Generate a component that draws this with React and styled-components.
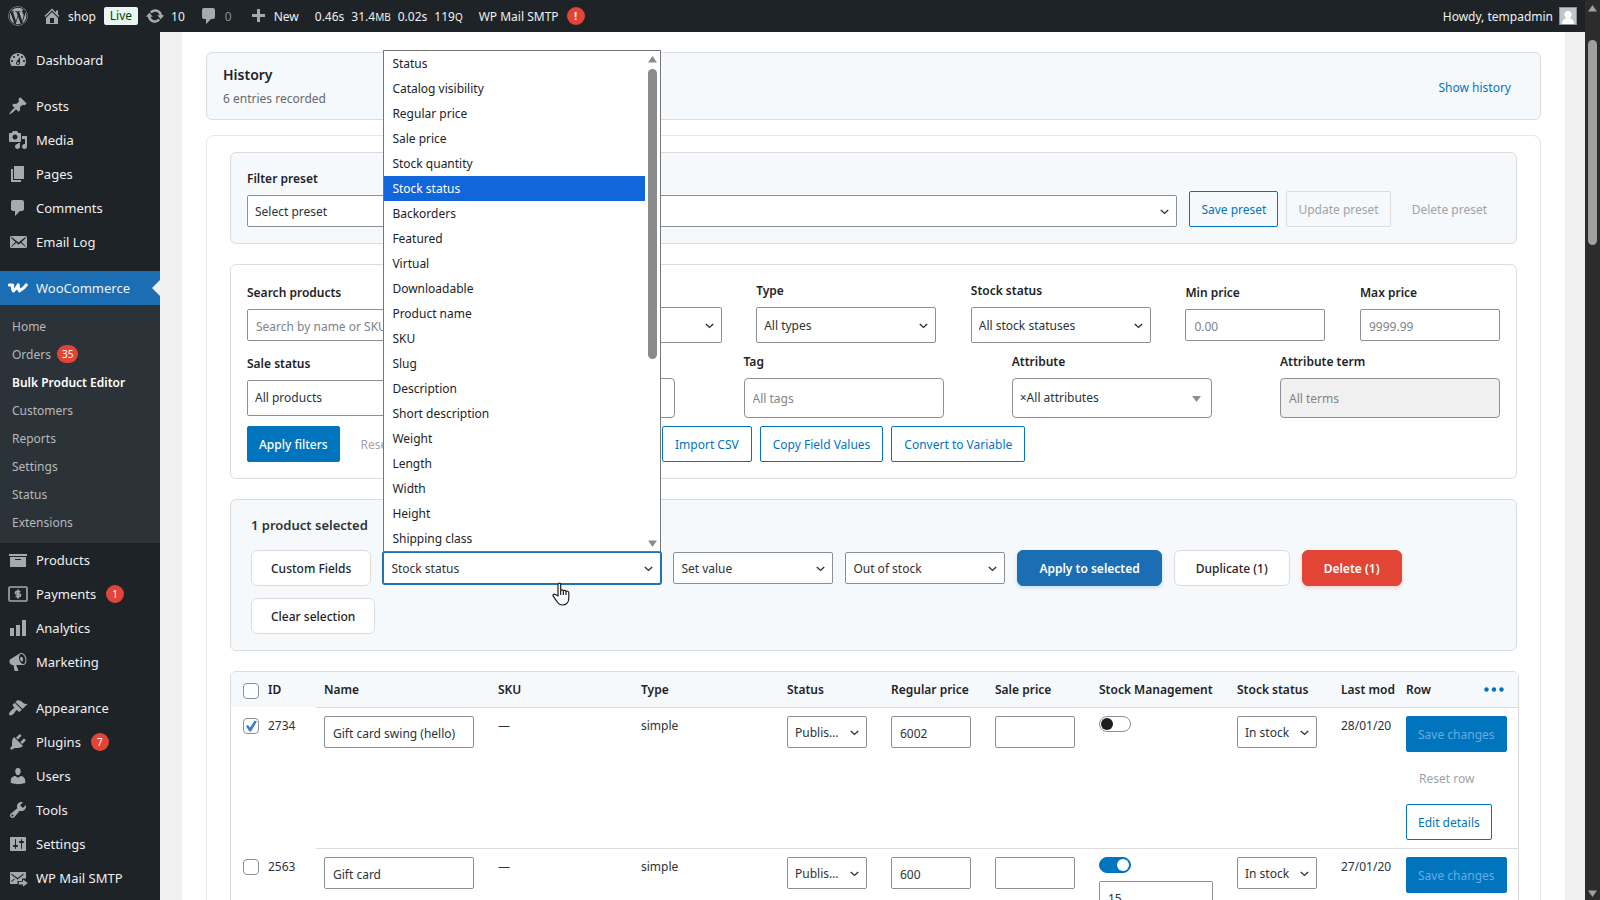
import React from "react";
import styled, { createGlobalStyle, css } from "styled-components";
import { FaWordpress } from "react-icons/fa";

const GlobalStyle = createGlobalStyle`
  *, *::before, *::after {
    box-sizing: border-box;
  }

  body {
    margin: 0;
    background: #f0f0f1;
  }

  body, button, input, select {
    font-family: "Noto Sans", "Open Sans", sans-serif;
    font-size: 12px;
    color: #2c3338;
  }

  ul {
    margin: 0;
    padding: 0;
    list-style: none;
  }

  h2, p {
    margin: 0;
  }
`;

const Window = styled.div`
  display: grid;
  grid-template-columns: minmax(0, 1fr) 15px;
  height: 100vh;
  overflow: hidden;
`;

const Page = styled.div`
  display: grid;
  grid-template-columns: 160px minmax(0, 1fr);
  grid-template-rows: 32px minmax(0, 1fr);
  overflow: hidden;
`;

const PageScrollbar = styled.div`
  display: flex;
  flex-direction: column;
  align-items: center;
  padding: 5px 0 3px;
  background: #2c2c2c;
`;

const PageThumb = styled.div`
  width: 9px;
  height: 205px;
  margin: 28px 0 auto;
  border-radius: 5px;
  background: #9f9f9f;
`;

const ScrollArrow = styled.svg.attrs({
  viewBox: "0 0 9 7",
  width: 9,
  height: 7,
})`
  display: block;
  fill: ${(props) => props.$color || "#9f9f9f"};
`;

/* admin bar */

const AdminBar = styled.header`
  grid-column: 1 / -1;
  display: flex;
  align-items: center;
  padding: 0 8px;
  background: #1d2327;
`;

const BarLink = styled.a`
  display: flex;
  align-items: center;
  gap: 6px;
  height: 32px;
  margin-right: ${(props) => props.$after || 16}px;
  color: ${(props) => (props.$dim ? "#8c8f94" : "#f0f0f1")};
  text-decoration: none;
  white-space: nowrap;

  svg {
    flex: none;
    color: #a7aaad;
  }
`;

const Stats = styled.span`
  display: flex;
  gap: 7px;

  small {
    font-size: 10px;
  }
`;

const LiveBadge = styled.span`
  padding: 0 6px;
  margin-right: 7px;
  border-radius: 2px;
  line-height: 18px;
  background: #e9f5f0;
  color: #00450c;
`;

const CountBadge = styled.span`
  display: inline-flex;
  align-items: center;
  justify-content: center;
  min-width: 18px;
  height: 18px;
  margin-left: 2px;
  padding: 0 5px;
  border-radius: 9px;
  background: #e24535;
  color: #fff;
  font-size: 10px;
  font-weight: ${(props) => (props.$bold ? 700 : 400)};
`;

const Account = styled(BarLink)`
  margin: 0 0 0 auto;
`;

const Avatar = styled.svg`
  border: 1px solid #8c8f94;
  background: #c3c4c7;
`;

/* side menu */

const SideMenu = styled.nav`
  padding-top: 11px;
  overflow: hidden;
  background: #1d2327;
`;

const MenuGroup = styled.ul`
  margin-bottom: ${(props) => (props.$last ? 0 : 12)}px;
`;

const MenuLink = styled.a`
  position: relative;
  display: flex;
  align-items: center;
  gap: 8px;
  height: 34px;
  padding-left: 8px;
  font-size: 13px;
  color: #f0f0f1;
  text-decoration: none;
  background: ${(props) => (props.$current ? "#1c6eb4" : "transparent")};

  svg {
    flex: none;
    color: ${(props) => (props.$current ? "#fff" : "#a7aaad")};
  }

  &::after {
    content: "";
    display: ${(props) => (props.$current ? "block" : "none")};
    position: absolute;
    right: 0;
    top: 9px;
    border: 8px solid transparent;
    border-left-width: 0;
    border-right-color: #f0f0f1;
  }
`;

const SubMenu = styled.ul`
  padding: 7px 0;
  background: #2c3338;
`;

const SubLink = styled.a`
  display: flex;
  align-items: center;
  gap: 4px;
  height: 28px;
  padding-left: 12px;
  color: ${(props) => (props.$current ? "#fff" : "#b5b9bd")};
  font-weight: ${(props) => (props.$current ? 600 : 400)};
  text-decoration: none;
`;

/* content cards */

const Main = styled.main`
  margin: 0 20px 0 22px;
  padding: 20px 24px;
  background: #fff;
`;

const Card = styled.section`
  padding: 16px;
  border: 1px solid #dcdcde;
  border-radius: 6px;
  background: ${(props) => (props.$tinted ? "#f6f9fc" : "#fff")};
`;

const HistoryCard = styled(Card)`
  display: flex;
  align-items: center;
  justify-content: space-between;
  height: 68px;
  margin-bottom: 15px;
  padding: 2px 16px 0;
`;

const HistoryTitle = styled.h2`
  font-size: 14px;
  line-height: 24px;
  font-weight: 600;
  color: #1d2327;
`;

const HistoryText = styled.p`
  line-height: 24px;
  color: #646970;
`;

const EditorCard = styled(Card)`
  display: flex;
  flex-direction: column;
  gap: 20px;
  padding: 16px 23px;
  border-color: #e6e6e8;
  border-radius: 8px;
`;

const PresetCard = styled(Card)`
  display: flex;
  align-items: flex-end;
  gap: 12px;
`;

const ButtonGroup = styled.div`
  display: flex;
  gap: 8px;
`;

const FilterCard = styled(Card)`
  display: grid;
  grid-template-rows: 62px 67px 36px;
  row-gap: 8px;
`;

const FilterRow = styled.div`
  display: flex;
  align-items: center;
  justify-content: space-between;
`;

const FilterActions = styled(ButtonGroup)`
  & > button {
    padding: 0 12px;
  }
`;

const FirstActions = styled(ButtonGroup)`
  width: 407px;
`;

const BulkCard = styled(Card)`
  padding: 16px 20px;
`;

const BulkTitle = styled.h2`
  margin-bottom: 16px;
  font-size: 13px;
  line-height: 18px;
  font-weight: 600;
`;

const BulkRow = styled.div`
  display: flex;
  flex-wrap: wrap;
  align-items: center;
  gap: 12px;
`;

/* controls */

const Field = styled.div`
  display: flex;
  flex-direction: column;
  gap: 6px;
  width: ${(props) => (props.$width ? `${props.$width}px` : "auto")};
  flex: ${(props) => (props.$width ? "0 1 auto" : "1")};
`;

const Label = styled.label`
  font-size: 12px;
  line-height: 20px;
  min-height: 20px;
  font-weight: 600;
  color: #1d2327;
`;

const controlLook = css`
  width: 100%;
  height: ${(props) => props.$height || 32}px;
  border: 1px solid #8c8f94;
  border-radius: ${(props) => (props.$round ? 4 : 2)}px;
  background: #fff;
  outline: none;
`;

const TextInput = styled.input`
  ${controlLook}
  display: block;
  padding: 2px 8px 0;

  &::placeholder {
    color: #808489;
    opacity: 1;
  }

  &:disabled {
    background: #f0f0f1;
  }
`;

const SelectBox = styled.div`
  position: relative;
  width: ${(props) => (props.$width ? `${props.$width}px` : "100%")};
`;

const SelectInput = styled.select`
  ${controlLook}
  appearance: none;
  display: block;
  padding: 0 24px 0 7px;
  text-overflow: ellipsis;
  ${(props) =>
    props.$active &&
    css`
      border-color: #2271b1;
      box-shadow: 0 0 0 1px #2271b1;
    `}
`;

const SelectCaret = styled.svg.attrs({
  viewBox: "0 0 9 6",
  width: 9,
  height: 6,
})`
  position: absolute;
  right: 8px;
  top: calc(50% - 2px);
  fill: none;
  stroke: #2c3338;
  stroke-width: 1.4;
  pointer-events: none;
`;

const TriangleCaret = styled.svg.attrs({
  viewBox: "0 0 9 6",
  width: 9,
  height: 6,
})`
  position: absolute;
  right: 11px;
  top: calc(50% - 2px);
  fill: #8c8f94;
  pointer-events: none;
`;

const Button = styled.button`
  flex: none;
  height: 36px;
  padding: 0 ${(props) => (props.$kind === "link" ? 12 : 11)}px;
  border: 1px solid #0075be;
  border-radius: 2px;
  background: transparent;
  color: #0075be;
  white-space: nowrap;

  ${(props) =>
    props.$kind === "primary" &&
    css`
      background: #0075be;
      color: #fff;
      font-weight: 500;
    `}

  ${(props) =>
    props.$kind === "link" &&
    css`
      border-color: transparent;
    `}

  &:disabled {
    color: ${(props) => (props.$kind === "primary" ? "#66ace0" : "#a0a3a6")};
    font-weight: 400;
    border-color: ${(props) =>
      ({ primary: "#0075be", link: "transparent" })[props.$kind] || "#dcdcde"};
  }
`;

const BulkButton = styled.button`
  height: 36px;
  padding: 0 ${(props) => (props.$wide ? 21 : 19)}px;
  border: 1px solid #dcdcde;
  border-radius: 6px;
  background: #fff;
  color: #1d2327;
  font-weight: 500;
  white-space: nowrap;

  ${(props) =>
    props.$fill &&
    css`
      border-color: ${props.$fill};
      background: ${props.$fill};
      color: #fff;
      font-weight: 600;
      box-shadow: 0 2px 4px ${props.$fill}33;
    `}
`;

/* field picker list */

const Popup = styled.div`
  position: absolute;
  z-index: 2;
  left: 0;
  right: 0;
  bottom: 100%;
  display: grid;
  grid-template-columns: minmax(0, 1fr) 15px;
  border: 1px solid #767676;
  background: #fff;
`;

const PopupOption = styled.li`
  height: 25px;
  padding: 1px 0 0 8px;
  line-height: 24px;
  color: ${(props) => (props.$active ? "#fff" : "#1d2327")};
  background: ${(props) => (props.$active ? "#1166dc" : "transparent")};
`;

const PopupScrollbar = styled.div`
  display: flex;
  flex-direction: column;
  align-items: center;
  padding: 5px 0 4px;
`;

const PopupThumb = styled.div`
  width: 9px;
  height: 290px;
  margin: 6px 0 auto;
  border-radius: 5px;
  background: #8b8b8b;
`;

const HandCursor = styled.svg`
  position: absolute;
  z-index: 3;
  left: 169px;
  top: 30px;
`;

/* product table */

const TableFrame = styled.div`
  margin-right: -2px;
  border: 1px solid #dcdcde;
  border-radius: 6px;
  overflow: hidden;
`;

const ProductTable = styled.table`
  width: 100%;
  table-layout: fixed;
  border-collapse: separate;
  border-spacing: 0;
`;

const HeadCell = styled.th`
  height: 36px;
  padding: 0 ${(props) => (props.$clip ? 0 : 8)}px 0 8px;
  border-bottom: 1px solid ${(props) => (props.$sticky ? "transparent" : "#dcdcde")};
  background: #f6f9fc;
  background-clip: padding-box;
  font-weight: 600;
  color: #1d2327;
  text-align: left;
  white-space: nowrap;
  overflow: hidden;
`;

const HeadSplit = styled.div`
  display: flex;
  align-items: center;
  justify-content: space-between;
`;

const MoreButton = styled.button`
  display: flex;
  padding: 4px 6px;
  border: 0;
  background: none;
`;

const Cell = styled.td`
  padding: 8px ${(props) => (props.$clip ? 0 : 8)}px 8px 8px;
  border-bottom: ${(props) => (props.$sticky ? 0 : 1)}px solid #dcdcde;
  vertical-align: top;
  line-height: 20px;
`;

const CellStack = styled.div`
  display: flex;
  flex-direction: column;
  align-items: flex-start;
  gap: 8px;
`;

const CheckBox = styled.input`
  appearance: none;
  display: block;
  width: 16px;
  height: 16px;
  margin: 2px 0 0 4px;
  border: 1px solid #8c8f94;
  border-radius: 4px;
  background: #fff;

  &:checked::before {
    content: "";
    display: block;
    width: 14px;
    height: 14px;
    background: #3582c4;
    clip-path: polygon(14% 50%, 28% 42%, 43% 60%, 76% 10%, 92% 18%, 50% 90%, 38% 90%);
  }
`;

const Toggle = styled.input`
  appearance: none;
  display: block;
  width: 32px;
  height: 16px;
  margin: 0;
  padding: 1px;
  border: 1px solid #8c8f94;
  border-radius: 8px;
  background: #fff;

  &::before {
    content: "";
    display: block;
    width: 12px;
    height: 12px;
    border-radius: 50%;
    background: #1e1e1e;
  }

  &:checked {
    border-color: #0075be;
    background: #0075be;
  }

  &:checked::before {
    margin-left: 16px;
    background: #fff;
  }
`;

const iconPaths = {
  dashboard:
    "M3.76 16h12.48c1.1-1.37 1.76-3.11 1.76-5 0-4.42-3.58-8-8-8s-8 3.58-8 8c0 1.89.66 3.63 1.76 5zM10 4c.55 0 1 .45 1 1s-.45 1-1 1-1-.45-1-1 .45-1 1-1zM6 6c.55 0 1 .45 1 1s-.45 1-1 1-1-.45-1-1 .45-1 1-1zm8 0c.55 0 1 .45 1 1s-.45 1-1 1-1-.45-1-1 .45-1 1-1zm-5.37 5.55L12 7v6c0 1.1-.9 2-2 2s-2-.9-2-2c0-.57.24-1.08.63-1.45zM4 10c.55 0 1 .45 1 1s-.45 1-1 1-1-.45-1-1 .45-1 1-1zm12 0c.55 0 1 .45 1 1s-.45 1-1 1-1-.45-1-1 .45-1 1-1zm-5 3c0-.55-.45-1-1-1s-1 .45-1 1 .45 1 1 1 1-.45 1-1z",
  pin: "M10.44 3.02l1.82-1.82 6.36 6.35-1.83 1.82c-1.05-.68-2.48-.57-3.41.36l-.75.75c-.92.93-1.04 2.35-.35 3.41l-1.83 1.82-2.41-2.41-2.8 2.79c-.42.42-3.38 2.71-3.8 2.29s1.86-3.39 2.28-3.81l2.79-2.79L4.1 9.36l1.83-1.82c1.05.69 2.48.57 3.4-.36l.75-.75c.93-.92 1.05-2.35.36-3.41z",
  media:
    "M13 11V4c0-.55-.45-1-1-1h-1.67L9 1H5L3.67 3H2c-.55 0-1 .45-1 1v7c0 .55.45 1 1 1h10c.55 0 1-.45 1-1zM7 4.5c1.38 0 2.5 1.12 2.5 2.5S8.38 9.5 7 9.5 4.5 8.38 4.5 7 5.62 4.5 7 4.5zM14 6h5v10.5c0 1.38-1.12 2.5-2.5 2.5S14 17.88 14 16.5s1.12-2.5 2.5-2.5c.17 0 .34.02.5.05V9h-3V6zm-4 8.05V13h2v3.5c0 1.38-1.12 2.5-2.5 2.5S7 17.88 7 16.5 8.12 14 9.5 14c.17 0 .34.02.5.05z",
  page: "M6 15V2h10v13H6zm-1 1h8v2H3V5h2v11z",
  comment:
    "M5 2h9c1.1 0 2 .9 2 2v7c0 1.1-.9 2-2 2h-2l-5 5v-5H5c-1.1 0-2-.9-2-2V4c0-1.1.9-2 2-2z",
  email:
    "M19 14.5v-9c0-.83-.67-1.5-1.5-1.5H3.49c-.83 0-1.5.67-1.5 1.5v9c0 .83.67 1.5 1.5 1.5H17.5c.83 0 1.5-.67 1.5-1.5zm-1.31-9.11c.33.33.15.67-.03.84L13.6 9.95l3.9 4.06c.12.14.2.36.06.51-.13.16-.43.15-.56.05l-4.37-3.73-2.14 1.95-2.13-1.95-4.37 3.73c-.13.1-.43.11-.56-.05-.14-.15-.06-.37.06-.51l3.9-4.06-4.06-3.72c-.18-.17-.36-.51-.03-.84s.67-.17.95.07l6.24 5.04 6.25-5.04c.28-.24.62-.4.95-.07z",
  archive: "M19 4v2H1V4h18zM2 7h16v10H2V7zm11 3V9H7v1h6z",
  chart: "M18 18V2h-4v16h4zm-6 0V7H8v11h4zm-6 0v-8H2v8h4z",
  megaphone:
    "M18.15 5.94c.46 1.62.38 3.22-.02 4.48-.42 1.28-1.26 2.18-2.3 2.48-.16.06-.26.06-.4.06-.06.02-.12.02-.18.02-.06.02-.14.02-.22.02h-6.8l2.22 5.5c.02.14-.06.26-.14.34-.08.1-.24.16-.34.16H6.95c-.1 0-.26-.06-.34-.16-.08-.08-.16-.2-.14-.34l-1-5.5H4.25l-.02-.02c-.5.06-1.08-.18-1.54-.62s-.88-1.08-1.06-1.88c-.24-.8-.2-1.56-.02-2.2.18-.62.58-1.08 1.06-1.3l.02-.02 9-5.4c.1-.06.18-.1.24-.16.06-.04.14-.08.24-.12.16-.08.28-.12.5-.18 1.04-.3 2.24.1 3.22.98s1.84 2.24 2.26 3.86zm-2.58 5.98h-.02c.4-.1.74-.34 1.04-.7.58-.7.86-1.76.86-3.04 0-.64-.1-1.3-.28-1.98-.34-1.36-1.02-2.5-1.78-3.24s-1.68-1.1-2.46-.88c-.82.22-1.4.96-1.7 2-.32 1.04-.28 2.36.06 3.72.38 1.36 1 2.5 1.8 3.24.78.74 1.62 1.1 2.48.88zm-2.54-7.08c.22-.04.42-.02.62.04.38.16.76.48 1.02 1s.42 1.2.42 1.78c0 .3-.04.56-.12.8-.18.48-.44.84-.86.94-.34.1-.8-.06-1.14-.4s-.64-.86-.78-1.5c-.18-.62-.12-1.24.02-1.72s.48-.84.82-.94z",
  brush:
    "M14.48 11.06L7.41 3.99l1.5-1.5c.5-.56 2.3-.47 3.51.32 1.21.8 1.43 1.28 2.91 2.1 1.18.64 2.45 1.26 4.45.85zm-.71.71L6.7 4.7 4.93 6.47c-.39.39-.39 1.02 0 1.41l1.06 1.06c.39.39.39 1.03 0 1.42-.6.6-1.43 1.11-2.21 1.69-.35.26-.7.53-1.01.84C1.43 14.23.4 16.08 1.4 17.07c.99 1 2.84-.03 4.18-1.36.31-.31.58-.66.85-1.02.57-.78 1.08-1.61 1.69-2.21.39-.39 1.02-.39 1.41 0l1.06 1.06c.39.39 1.02.39 1.41 0z",
  plug: "M13.11 4.36L9.87 7.6 8 5.73l3.24-3.24c.35-.34 1.05-.2 1.56.32.52.51.66 1.21.31 1.55zm-8 1.77l.91-1.12 9.01 9.01-1.19.84c-.71.71-2.63 1.16-3.82 1.16H6.14L4.9 17.26c-.59.59-1.54.59-2.12 0-.59-.58-.59-1.53 0-2.12l1.24-1.24v-3.88c0-1.13.4-3.19 1.09-3.89zm7.26 3.97l3.24-3.24c.34-.35 1.04-.21 1.55.31.52.51.66 1.21.31 1.55l-3.24 3.25z",
  user: "M10 9.25c-2.27 0-2.73-3.44-2.73-3.44C7 4.02 7.82 2 9.97 2c2.16 0 2.98 2.02 2.71 3.81 0 0-.41 3.44-2.68 3.44zm0 2.57L12.72 10c2.39 0 4.52 2.33 4.52 4.53v2.49s-3.65 1.13-7.24 1.13c-3.65 0-7.24-1.13-7.24-1.13v-2.49c0-2.25 1.94-4.48 4.47-4.48z",
  wrench:
    "M16.68 9.77c-1.34 1.34-3.3 1.67-4.95.99l-5.41 6.52c-.99.99-2.59.99-3.58 0s-.99-2.59 0-3.57l6.52-5.42c-.68-1.65-.35-3.61.99-4.95 1.28-1.28 3.12-1.62 4.72-1.06l-2.89 2.89 2.82 2.82 2.86-2.87c.53 1.58.18 3.39-1.08 4.65zM3.81 16.21c.4.39 1.04.39 1.43 0 .4-.4.4-1.04 0-1.43-.39-.4-1.03-.4-1.43 0-.39.39-.39 1.03 0 1.43z",
  sliders:
    "M18 16V4c0-.55-.45-1-1-1H3c-.55 0-1 .45-1 1v12c0 .55.45 1 1 1h14c.55 0 1-.45 1-1zM8 11h1c.55 0 1 .45 1 1s-.45 1-1 1H8v1.5c0 .28-.22.5-.5.5s-.5-.22-.5-.5V13H6c-.55 0-1-.45-1-1s.45-1 1-1h1V5.5c0-.28.22-.5.5-.5s.5.22.5.5V11zm5-2h-1c-.55 0-1-.45-1-1s.45-1 1-1h1V5.5c0-.28.22-.5.5-.5s.5.22.5.5V7h1c.55 0 1 .45 1 1s-.45 1-1 1h-1v5.5c0 .28-.22.5-.5.5s-.5-.22-.5-.5V9z",
  home: "M16 8.5l1.53 1.53-1.06 1.06L10 4.6l-6.47 6.49-1.06-1.06L10 2.5l4 4v-2h2v4zm-6-2.46l6 5.99V18H4v-5.97zM12 17v-5H8v5h4z",
  update:
    "M10.2 3.28c3.53 0 6.43 2.61 6.92 6h2.08l-3.5 4-3.5-4h2.32c-.45-1.97-2.21-3.45-4.32-3.45-1.45 0-2.73.71-3.54 1.78L4.95 5.66C6.23 4.2 8.11 3.28 10.2 3.28zm-.4 13.44c-3.52 0-6.43-2.61-6.92-6H.8l3.5-4c1.17 1.33 2.33 2.67 3.5 4H5.48c.45 1.97 2.21 3.45 4.32 3.45 1.45 0 2.73-.71 3.54-1.78l1.71 1.95c-1.28 1.46-3.15 2.38-5.25 2.38z",
  plus: "M17 8v3h-5v5H9v-5H4V8h5V3h3v5h5z",
  mail: "M2 4h15c.6 0 1 .4 1 1v5.5h-4v2.6H9.500V16H3c-.6 0-1-.4-1-1V5c0-.6.4-1 1-1zM3.400 5.600v1.200l6.100 4.600 6.100-4.600V5.600l-6.100 4.500zM3.400 14.300l3.400-3-.8-.6-2.600 2.400zM15 11.400l4.800 3.700-4.800 3.700v-2.300h-4.200v-2.800H15z",
};

function Icon({ name, size = 20 }) {
  if (name === "woo") {
    return (
      <svg width={size} height={size} viewBox="0 0 20 20" fill="none" stroke="currentColor">
        <path
          d="M1.500 7H4.600C4.300 9.500 4.500 11.500 5.400 12.800C7.500 11.600 9.200 9.500 10.200 7C10.100 9.500 10.400 11.500 11.500 12.800C14 11.600 16.600 9.500 18.200 7"
          strokeWidth="3.200"
          strokeLinejoin="round"
          strokeLinecap="round"
        />
      </svg>
    );
  }
  if (name === "payments") {
    return (
      <svg width={size} height={size} viewBox="0 0 20 20" fill="none" stroke="currentColor">
        <rect x="1" y="3" width="18" height="14" rx="1" strokeWidth="1.600" />
        <path d="M12.400 7.700H8.700a1.100 1.100 0 0 0 0 2.300h2.600a1.100 1.100 0 0 1 0 2.300H7.600M10 5.600v8.800" strokeWidth="1.700" />
      </svg>
    );
  }
  return (
    <svg width={size} height={size} viewBox="0 0 20 20" fill="currentColor">
      <path fillRule="evenodd" d={iconPaths[name]} />
    </svg>
  );
}

const menuGroups = [
  [{ label: "Dashboard", icon: "dashboard" }],
  [
    { label: "Posts", icon: "pin" },
    { label: "Media", icon: "media" },
    { label: "Pages", icon: "page" },
    { label: "Comments", icon: "comment" },
    { label: "Email Log", icon: "email" },
  ],
  [
    {
      label: "WooCommerce",
      icon: "woo",
      current: true,
      children: [
        { label: "Home" },
        { label: "Orders", count: 35 },
        { label: "Bulk Product Editor", current: true },
        { label: "Customers" },
        { label: "Reports" },
        { label: "Settings" },
        { label: "Status" },
        { label: "Extensions" },
      ],
    },
    { label: "Products", icon: "archive" },
    { label: "Payments", icon: "payments", count: 1 },
    { label: "Analytics", icon: "chart" },
    { label: "Marketing", icon: "megaphone" },
  ],
  [
    { label: "Appearance", icon: "brush" },
    { label: "Plugins", icon: "plug", count: 7 },
    { label: "Users", icon: "user" },
    { label: "Tools", icon: "wrench" },
    { label: "Settings", icon: "sliders" },
    { label: "WP Mail SMTP", icon: "mail" },
  ],
];

const bulkFields = [
  "Status",
  "Catalog visibility",
  "Regular price",
  "Sale price",
  "Stock quantity",
  "Stock status",
  "Backorders",
  "Featured",
  "Virtual",
  "Downloadable",
  "Product name",
  "SKU",
  "Slug",
  "Description",
  "Short description",
  "Weight",
  "Length",
  "Width",
  "Height",
  "Shipping class",
];

const products = [
  {
    id: 2734,
    name: "Gift card swing (hello)",
    price: "6002",
    selected: true,
    modified: "28/01/20",
  },
  { id: 2563, name: "Gift card", price: "600", stock: "15", modified: "27/01/20" },
];

// the name column takes whatever width is left
const columnWidths = [29, 56, null, 143, 146, 104, 104, 104, 138, 104, 65, 120];

function Select({ id, label, value, width, height, active, children }) {
  return (
    <SelectBox $width={width}>
      <SelectInput id={id} aria-label={label} $height={height} $active={active} defaultValue={value}>
        <option>{value}</option>
      </SelectInput>
      <SelectCaret>
        <path d="M0.800 1l3.700 3.400L8.200 1" />
      </SelectCaret>
      {children}
    </SelectBox>
  );
}

function TopBar() {
  return (
    <AdminBar>
      <BarLink href="#" aria-label="WordPress" $after={14}>
        <FaWordpress size={20} />
      </BarLink>
      <BarLink href="#" $after={8}>
        <Icon name="home" />
        shop
      </BarLink>
      <LiveBadge>Live</LiveBadge>
      <BarLink href="#" $after={14}>
        <Icon name="update" />
        10
      </BarLink>
      <BarLink href="#" $dim>
        <Icon name="comment" />0
      </BarLink>
      <BarLink href="#">
        <Icon name="plus" />
        New
      </BarLink>
      <BarLink href="#">
        <Stats>
          <span>0.46s</span>
          <span>
            31.4<small>MB</small>
          </span>
          <span>0.02s</span>
          <span>
            119<small>Q</small>
          </span>
        </Stats>
      </BarLink>
      <BarLink href="#">
        WP Mail SMTP
        <CountBadge $bold>!</CountBadge>
      </BarLink>
      <Account href="#">
        Howdy, tempadmin
        <Avatar width="18" height="18" viewBox="0 0 16 16">
          <circle cx="8" cy="6.500" r="3.600" fill="#fff" />
          <path d="M2 16c0-3.500 2-6 6-6s6 2.500 6 6z" fill="#fff" />
        </Avatar>
      </Account>
    </AdminBar>
  );
}

function Sidebar() {
  return (
    <SideMenu>
      {menuGroups.map((group, index) => (
        <MenuGroup key={index} $last={index === menuGroups.length - 1}>
          {group.map((item) => (
            <li key={item.label}>
              <MenuLink href="#" $current={item.current}>
                <Icon name={item.icon} />
                {item.label}
                {item.count && <CountBadge>{item.count}</CountBadge>}
              </MenuLink>
              {item.children && (
                <SubMenu>
                  {item.children.map((child) => (
                    <li key={child.label}>
                      <SubLink href="#" $current={child.current}>
                        {child.label}
                        {child.count && <CountBadge>{child.count}</CountBadge>}
                      </SubLink>
                    </li>
                  ))}
                </SubMenu>
              )}
            </li>
          ))}
        </MenuGroup>
      ))}
    </SideMenu>
  );
}

function Filters() {
  return (
    <FilterCard>
      <FilterRow>
        <Field $width={260}>
          <Label htmlFor="search">Search products</Label>
          <TextInput id="search" placeholder="Search by name or SKU" />
        </Field>
        <Field $width={180}>
          <Label />
          <Select label="Category" value="" height={36} />
        </Field>
        <Field $width={180}>
          <Label htmlFor="type">Type</Label>
          <Select id="type" value="All types" height={36} />
        </Field>
        <Field $width={180}>
          <Label htmlFor="stock">Stock status</Label>
          <Select id="stock" value="All stock statuses" height={36} />
        </Field>
        <Field $width={140}>
          <Label htmlFor="min">Min price</Label>
          <TextInput id="min" placeholder="0.00" />
        </Field>
        <Field $width={140}>
          <Label htmlFor="max">Max price</Label>
          <TextInput id="max" placeholder="9999.99" />
        </Field>
      </FilterRow>
      <FilterRow>
        <Field $width={160}>
          <Label htmlFor="sale">Sale status</Label>
          <Select id="sale" value="All products" height={36} />
        </Field>
        <Field $width={200}>
          <Label />
          <TextInput aria-label="Categories" $height={40} $round />
        </Field>
        <Field $width={200}>
          <Label htmlFor="tag">Tag</Label>
          <TextInput id="tag" placeholder="All tags" $height={40} $round />
        </Field>
        <Field $width={200}>
          <Label htmlFor="attribute">Attribute</Label>
          <SelectBox>
            <SelectInput id="attribute" $height={40} $round>
              <option>×All attributes</option>
            </SelectInput>
            <TriangleCaret>
              <path d="M0 0h9L4.500 6z" />
            </TriangleCaret>
          </SelectBox>
        </Field>
        <Field $width={220}>
          <Label htmlFor="term">Attribute term</Label>
          <TextInput id="term" placeholder="All terms" disabled $height={40} $round />
        </Field>
      </FilterRow>
      <FilterActions>
        <FirstActions>
          <Button $kind="primary">Apply filters</Button>
          <Button $kind="link" disabled>
            Reset
          </Button>
        </FirstActions>
        <Button>Import CSV</Button>
        <Button>Copy Field Values</Button>
        <Button>Convert to Variable</Button>
      </FilterActions>
    </FilterCard>
  );
}

function FieldPopup() {
  return (
    <Popup>
      <ul role="listbox" aria-label="Fields">
        {bulkFields.map((field) => (
          <PopupOption
            key={field}
            role="option"
            aria-selected={field === "Stock status"}
            $active={field === "Stock status"}
          >
            {field}
          </PopupOption>
        ))}
      </ul>
      <PopupScrollbar>
        <ScrollArrow $color="#8b8b8b">
          <path d="M4.500 0L9 6.500H0z" />
        </ScrollArrow>
        <PopupThumb />
        <ScrollArrow $color="#8b8b8b">
          <path d="M4.500 7L9 0.500H0z" />
        </ScrollArrow>
      </PopupScrollbar>
    </Popup>
  );
}

function BulkActions() {
  return (
    <BulkCard $tinted>
      <BulkTitle>1 product selected</BulkTitle>
      <BulkRow>
        <BulkButton>Custom Fields</BulkButton>
        <Select label="Field" value="Stock status" width={278} active>
          <FieldPopup />
          <HandCursor width="18" height="24" viewBox="0 0 18 24" fill="#fff" stroke="#1e1e1e" strokeWidth="1.200">
            <path
              strokeLinejoin="round"
              d="M6 14V2.500C6 .6 8.700.6 8.700 2.500V9c.2-1.500 2.500-1.400 2.700.2.400-1.200 2.500-1 2.600.6.600-1 2.800-.7 2.800 1v5.200c0 4-2.300 7-6.300 7-3 0-4.400-1.500-5.700-3.700L1.200 14.200c-.9-1.500 1-2.800 2.400-1.600z"
            />
            <path d="M8.700 9v4M11.400 9.500V13M14 10v3" fill="none" />
          </HandCursor>
        </Select>
        <Select label="Action" value="Set value" width={160} />
        <Select label="Value" value="Out of stock" width={160} />
        <BulkButton $wide $fill="#1c6eb4">
          Apply to selected
        </BulkButton>
        <BulkButton $wide>Duplicate (1)</BulkButton>
        <BulkButton $wide $fill="#e24535">
          Delete (1)
        </BulkButton>
        <BulkButton>Clear selection</BulkButton>
      </BulkRow>
    </BulkCard>
  );
}

function ProductRow({ product }) {
  return (
    <tr>
      <Cell $sticky>
        <CheckBox type="checkbox" aria-label={`Select ${product.id}`} defaultChecked={product.selected} />
      </Cell>
      <Cell $sticky>{product.id}</Cell>
      <Cell>
        <SelectBox $width={150}>
          <TextInput aria-label="Name" defaultValue={product.name} />
        </SelectBox>
      </Cell>
      <Cell>—</Cell>
      <Cell>simple</Cell>
      <Cell>
        <Select label="Status" value="Published" width={80} />
      </Cell>
      <Cell>
        <SelectBox $width={80}>
          <TextInput aria-label="Regular price" defaultValue={product.price} />
        </SelectBox>
      </Cell>
      <Cell>
        <SelectBox $width={80}>
          <TextInput aria-label="Sale price" />
        </SelectBox>
      </Cell>
      <Cell>
        <CellStack>
          <Toggle type="checkbox" role="switch" aria-label="Manage stock" defaultChecked={!!product.stock} />
          {product.stock && (
            <SelectBox $width={114}>
              <TextInput aria-label="Quantity" defaultValue={product.stock} />
            </SelectBox>
          )}
        </CellStack>
      </Cell>
      <Cell>
        <Select label="Stock status" value="In stock" width={80} />
      </Cell>
      <Cell $clip>{product.modified}</Cell>
      <Cell>
        <CellStack>
          <Button $kind="primary" disabled>
            Save changes
          </Button>
          <Button $kind="link" disabled>
            Reset row
          </Button>
          <Button>Edit details</Button>
        </CellStack>
      </Cell>
    </tr>
  );
}

function Products() {
  return (
    <TableFrame>
      <ProductTable>
        <colgroup>
          {columnWidths.map((width, index) => (
            <col key={index} width={width || undefined} />
          ))}
        </colgroup>
        <thead>
          <tr>
            <HeadCell $sticky>
              <CheckBox type="checkbox" aria-label="Select all" />
            </HeadCell>
            <HeadCell $sticky>ID</HeadCell>
            <HeadCell>Name</HeadCell>
            <HeadCell>SKU</HeadCell>
            <HeadCell>Type</HeadCell>
            <HeadCell>Status</HeadCell>
            <HeadCell>Regular price</HeadCell>
            <HeadCell>Sale price</HeadCell>
            <HeadCell>Stock Management</HeadCell>
            <HeadCell>Stock status</HeadCell>
            <HeadCell $clip>Last mod</HeadCell>
            <HeadCell>
              <HeadSplit>
                Row
                <MoreButton aria-label="Columns">
                  <svg width="20" height="5" viewBox="0 0 20 5" fill="#0075be">
                    <circle cx="2.500" cy="2.500" r="2.200" />
                    <circle cx="10" cy="2.500" r="2.200" />
                    <circle cx="17.500" cy="2.500" r="2.200" />
                  </svg>
                </MoreButton>
              </HeadSplit>
            </HeadCell>
          </tr>
        </thead>
        <tbody>
          {products.map((product) => (
            <ProductRow key={product.id} product={product} />
          ))}
        </tbody>
      </ProductTable>
    </TableFrame>
  );
}

function App() {
  return (
    <Window>
      <GlobalStyle />
      <Page>
        <TopBar />
        <Sidebar />
        <Main>
          <HistoryCard $tinted>
            <div>
              <HistoryTitle>History</HistoryTitle>
              <HistoryText>6 entries recorded</HistoryText>
            </div>
            <Button $kind="link">Show history</Button>
          </HistoryCard>
          <EditorCard>
            <PresetCard $tinted>
              <Field>
                <Label htmlFor="preset">Filter preset</Label>
                <Select id="preset" value="Select preset" />
              </Field>
              <ButtonGroup>
                <Button>Save preset</Button>
                <Button disabled>Update preset</Button>
                <Button $kind="link" disabled>
                  Delete preset
                </Button>
              </ButtonGroup>
            </PresetCard>
            <Filters />
            <BulkActions />
            <Products />
          </EditorCard>
        </Main>
      </Page>
      <PageScrollbar>
        <ScrollArrow>
          <path d="M4.500 0L9 6.500H0z" />
        </ScrollArrow>
        <PageThumb />
        <ScrollArrow>
          <path d="M4.500 7L9 0.500H0z" />
        </ScrollArrow>
      </PageScrollbar>
    </Window>
  );
}

export default App;
